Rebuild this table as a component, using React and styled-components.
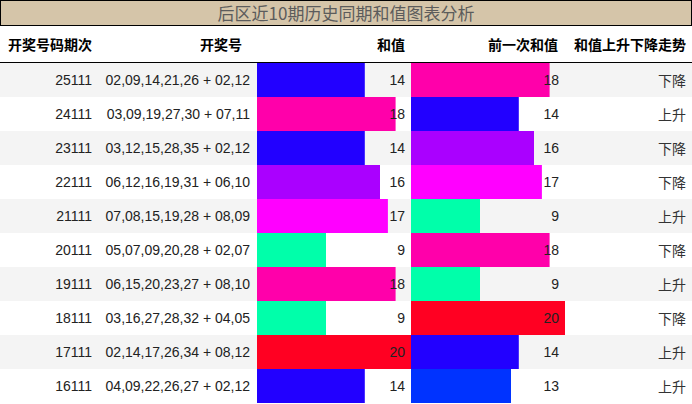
import React from "react";
import styled, { createGlobalStyle } from "styled-components";

const GlobalStyle = createGlobalStyle`
  html, body { margin: 0; padding: 0; background: #fff; }
  body { font-family: "Liberation Sans", "Noto Sans CJK SC", sans-serif; }
`;

const COLS = "98px 159px 154px 154px 1fr";

const Wrap = styled.div`
  width: 692px;
`;

const Title = styled.div`
  height: 24px;
  border: 1px solid #000;
  background: #d5c5a9;
  color: #5c5c5c;
  font-family: "Noto Sans CJK SC", sans-serif;
  font-size: 17px;
  line-height: 24px;
  text-align: center;
`;

const HeadRow = styled.div`
  display: grid;
  grid-template-columns: ${COLS};
  height: 36px;
  border-bottom: 1px solid #000;
  align-items: center;
`;

const HeadCell = styled.div`
  font-family: "Noto Sans CJK SC", sans-serif;
  font-weight: 700;
  font-size: 14px;
  color: #000;
  text-align: right;
  padding-right: ${(p) => p.$pr ?? 6}px;
  white-space: nowrap;
`;

const Row = styled.div`
  display: grid;
  grid-template-columns: ${COLS};
  height: 34px;
  background: ${(p) => (p.$alt ? "#f4f4f4" : "#ffffff")};
`;

const Cell = styled.div`
  display: flex;
  align-items: center;
  justify-content: flex-end;
  padding-right: ${(p) => p.$pr ?? 6}px;
  font-size: 14px;
  color: #222;
  white-space: nowrap;
`;

const BarCell = styled(Cell)`
  background-repeat: no-repeat;
  background-image: linear-gradient(${(p) => p.$color}, ${(p) => p.$color});
`;

const TrendCell = styled(Cell)`
  font-family: "Noto Sans CJK SC", sans-serif;
  color: #333;
`;

const COLORS = {
  9: "#00ffaa",
  13: "#0033ff",
  14: "#2200ff",
  16: "#aa00ff",
  17: "#ff00ff",
  18: "#ff00aa",
  20: "#ff0022",
};

const DATA = [
  ["25111", "02,09,14,21,26 + 02,12", 14, 18],
  ["24111", "03,09,19,27,30 + 07,11", 18, 14],
  ["23111", "03,12,15,28,35 + 02,12", 14, 16],
  ["22111", "06,12,16,19,31 + 06,10", 16, 17],
  ["21111", "07,08,15,19,28 + 08,09", 17, 9],
  ["20111", "05,07,09,20,28 + 02,07", 9, 18],
  ["19111", "06,15,20,23,27 + 08,10", 18, 9],
  ["18111", "03,16,27,28,32 + 04,05", 9, 20],
  ["17111", "02,14,17,26,34 + 08,12", 20, 14],
  ["16111", "04,09,22,26,27 + 02,12", 14, 13],
];

function Bar({ value }) {
  const pct = (value / 20) * 100;
  return (
    <BarCell $color={COLORS[value]} style={{ backgroundSize: `${pct}% 100%` }}>
      {value}
    </BarCell>
  );
}

export default function App() {
  return (
    <Wrap>
      <GlobalStyle />
      <Title>后区近10期历史同期和值图表分析</Title>
      <HeadRow>
        <HeadCell>开奖号码期次</HeadCell>
        <HeadCell $pr={15}>开奖号</HeadCell>
        <HeadCell>和值</HeadCell>
        <HeadCell $pr={7}>前一次和值</HeadCell>
        <HeadCell>和值上升下降走势</HeadCell>
      </HeadRow>
      {DATA.map(([issue, nums, sum, prev], i) => (
        <Row key={issue} $alt={i % 2 === 0}>
          <Cell>{issue}</Cell>
          <Cell $pr={7}>{nums}</Cell>
          <Bar value={sum} />
          <Bar value={prev} />
          <TrendCell>{sum > prev ? "上升" : "下降"}</TrendCell>
        </Row>
      ))}
    </Wrap>
  );
}
